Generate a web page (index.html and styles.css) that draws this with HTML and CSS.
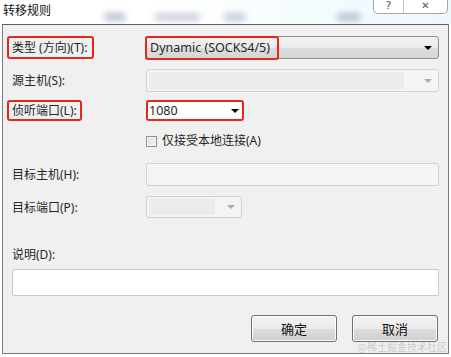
FILE: index.html
```html
<!DOCTYPE html>
<html lang="zh-CN">

<head>
	<meta charset="UTF-8">
	<meta name="viewport" content="width=device-width, initial-scale=1.0">
	<title>转移规则</title>
	<link rel="stylesheet" href="styles.css">
</head>

<body>
	<header class="titlebar">
		<span class="title">转移规则</span>
		<span class="blur b1"></span>
		<span class="blur b2"></span>
		<span class="blur b3"></span>
		<span class="blur b4"></span>
		<div class="caption">
			<span class="cap-btn">?</span>
			<span class="cap-btn">✕</span>
		</div>
	</header>

	<main class="dialog">
		<div class="row r1">
			<label class="lbl mark">类型 (方向)(T):</label>
			<div class="combo">
				<span class="val">Dynamic (SOCKS4/5)</span>
				<span class="arrow"></span>
				<span class="ring"></span>
			</div>
		</div>

		<div class="row r2">
			<label class="lbl">源主机(S):</label>
			<div class="combo off"><span class="inner"></span><span class="arrow"></span></div>
		</div>

		<div class="row r3">
			<label class="lbl mark">侦听端口(L):</label>
			<div class="combo port mark-box">
				<span class="val">1080</span>
				<span class="arrow"></span>
			</div>
		</div>

		<div class="row r4">
			<span></span>
			<label class="check"><span class="box"></span>仅接受本地连接(A)</label>
		</div>

		<div class="row r5">
			<label class="lbl">目标主机(H):</label>
			<div class="field off"></div>
		</div>

		<div class="row r6">
			<label class="lbl">目标端口(P):</label>
			<div class="combo off short"><span class="inner"></span><span class="arrow"></span></div>
		</div>

		<label class="lbl note-lbl">说明(D):</label>
		<div class="note"></div>

		<div class="actions">
			<button class="btn">确定</button>
			<button class="btn">取消</button>
		</div>

		<span class="wm">@稀土掘金技术社区</span>
	</main>
</body>

</html>
```

FILE: styles.css
```css
* {
	margin: 0;
	padding: 0;
	box-sizing: border-box;
}

body {
	background: #fff;
	font: 12px/16px "Noto Sans", "Noto Sans CJK SC", sans-serif;
	color: #262626;
	width: 451px;
	height: 357px;
	overflow: hidden;
}

.titlebar {
	position: relative;
	height: 24px;
	display: flex;
	align-items: center;
	background: linear-gradient(100deg, #fff 40%, #f3fbfd 70%, #eef8fb);
}

.title {
	margin: -2px 0 0 3px;
	font-size: 12px;
	color: #111;
}

.blur {
	height: 8px;
	margin-top: 10px;
	border-radius: 4px;
	background: #8f9dbc;
	filter: blur(3px);
	opacity: .6;
}

.b1 { width: 22px; margin-left: 53px; }
.b2 { width: 46px; margin-left: 28px; opacity: .45; }
.b3 { width: 22px; margin-left: 24px; opacity: .5; }
.b4 { width: 24px; margin-left: 91px; }

.caption {
	position: absolute;
	right: 3px;
	top: -2px;
	width: 75px;
	height: 16px;
	display: flex;
	border: 1px solid #a5a5a5;
	border-top: 0;
	border-radius: 0 0 5px 5px;
	background: #fff;
}

.cap-btn {
	flex: 1;
	text-align: center;
	font: 11px/15px "DejaVu Sans", sans-serif;
	color: #555;
}

.cap-btn + .cap-btn {
	flex: 1.5;
	border-left: 1px solid #c4c4c4;
	font-size: 10px;
}

.dialog {
	position: relative;
	margin-left: 2px;
	width: 447px;
	height: 330px;
	background: #f0f0f0;
	border: 1px solid #7c7c7c;
	border-top-color: #5f5f5f;
	padding: 0 9px 0 0;
	display: flex;
	flex-direction: column;
}

.row {
	display: grid;
	grid-template-columns: 143px 1fr;
	align-items: center;
}

.r1 { margin-top: 11px; height: 23px; }
.r2 { margin-top: 10px; height: 23px; }
.r3 { margin-top: 8px; height: 21px; }
.r4 { margin-top: 12px; height: 16px; }
.r5 { margin-top: 14px; height: 23px; }
.r6 { margin-top: 10px; height: 22px; }

.lbl {
	justify-self: start;
	margin-left: 4px;
	padding: 0 3px;
	border: 2px solid transparent;
	border-radius: 3px;
	line-height: 17px;
}

.r1 .lbl { height: 23px; line-height: 19px; padding-right: 5px; }

.mark {
	border-color: #e4261b;
}

.combo {
	position: relative;
	height: 23px;
	display: flex;
	align-items: center;
	border: 1px solid #8e8f8f;
	border-radius: 3px;
	background: linear-gradient(#f2f2f2, #ebebeb 50%, #dddddd 51%, #d6d6d6);
}

.val {
	flex: 1;
	padding-left: 3px;
	font-size: 12.5px;
}

.arrow {
	width: 0;
	height: 0;
	margin: 0 6px 0 auto;
	border: 4px solid transparent;
	border-top: 4px solid #000;
	border-bottom: 0;
}

.ring {
	position: absolute;
	left: -2px;
	top: -1px;
	width: 134px;
	height: 24px;
	border: 2px solid #e4261b;
	border-radius: 3px;
}

.off {
	border-color: #d2d2d2;
	background: #f4f4f4;
}

.off .arrow {
	border-top-color: #aaa;
}

.inner {
	align-self: stretch;
	flex: 1;
	margin: 2px 20px 2px 2px;
	background: #ebebeb;
}

.port {
	width: 98px;
	height: 21px;
	background: #fff;
	border: 2px solid #e4261b;
}

.port .val {
	padding-left: 1px;
}

.port .arrow {
	margin-right: 3px;
}

.short {
	width: 96px;
	height: 22px;
}

.short .inner {
	margin-right: 12px;
}

.check {
	display: flex;
	align-items: center;
	gap: 5px;
	margin-left: 0;
}

.box {
	width: 11px;
	height: 11px;
	border: 1px solid #8e8f8f;
	background: linear-gradient(135deg, #dcdcdc, #f6f6f6);
	box-shadow: inset 0 0 0 1px #f4f4f4;
}

.field {
	height: 23px;
	border: 1px solid #d2d2d2;
	border-radius: 2px;
}

.note-lbl {
	margin-top: 28px;
	margin-left: 6px;
	padding: 0 3px;
	border: 0;
}

.note {
	margin: 6px 0 0 9px;
	height: 27px;
	background: #fff;
	border: 1px solid #c9c9c9;
	border-radius: 2px;
}

.actions {
	display: flex;
	justify-content: flex-end;
	gap: 15px;
	margin: 19px 1px 0 0;
}

.btn {
	width: 86px;
	height: 27px;
	border: 1px solid #707070;
	border-radius: 3px;
	background: linear-gradient(#f2f2f2, #ebebeb 50%, #dddddd 51%, #cfcfcf);
	box-shadow: inset 0 0 0 1px #fcfcfc;
	font: 13px/16px "Noto Sans", "Noto Sans CJK SC", sans-serif;
	color: #111;
}

.wm {
	position: absolute;
	right: 1px;
	bottom: 0;
	font: 10px/12px "Noto Sans CJK SC", sans-serif;
	color: #c9cbcd;
}
```
